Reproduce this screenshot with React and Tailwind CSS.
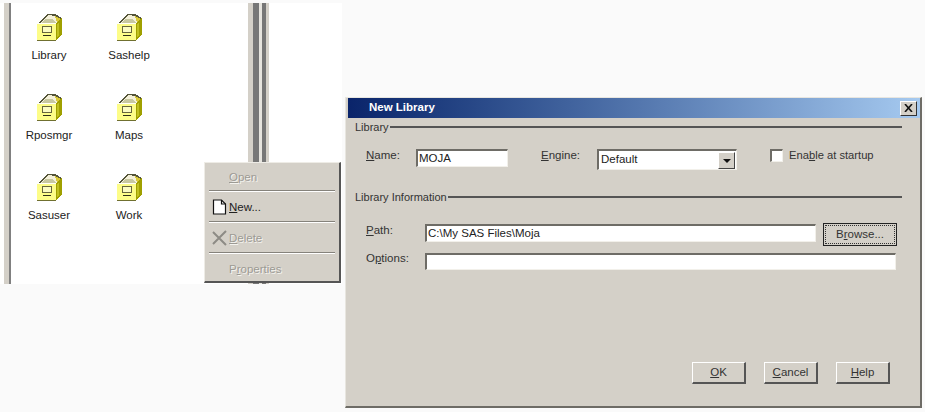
import React from "react";

const FONT = "font-['Liberation_Sans',Arial,sans-serif]";

function LibIcon() {
  return (
    <svg width="28" height="28" viewBox="0 0 28 28" shapeRendering="crispEdges">
      {/* folders sticking out of the drawer */}
      <polygon points="3,10 9,4 13,1 20,1 27,5 27,10" fill="#55553a" />
      <polygon points="5,10 10,5 14,2 19,3 22,6 22,10" fill="#f4f0d8" />
      <polygon points="10,6 18,6 21,10 7,10" fill="#c8c8a0" />
      <polygon points="20,3 26,6 26,11 22,10" fill="#d8c838" />
      {/* front and side */}
      <polygon points="21,10 27,5 27,21 21,27" fill="#a0a000" />
      <polygon points="22,11 24,9 24,22 22,24" fill="#c0c020" />
      <rect x="2" y="10" width="19" height="17" fill="#fdfd88" />
      <rect x="2" y="10" width="19" height="1" fill="#fffff8" />
      <rect x="7.5" y="13.5" width="9" height="6" fill="#fbfbc0" stroke="#66663c" strokeWidth="1" />
      <rect x="8" y="22" width="8" height="1" fill="#303018" />
      <rect x="2" y="27" width="19" height="1" fill="#707030" />
    </svg>
  );
}

function LibItem({ name }) {
  return (
    <div className="flex flex-col items-center w-[80px] h-[80px]">
      <LibIcon />
      <span className="mt-[7px] text-[11.5px] leading-[14px] text-[#222]">{name}</span>
    </div>
  );
}

function U({ children }) {
  return <span className="underline underline-offset-1">{children}</span>;
}

function Sunken({ className, children }) {
  return (
    <div className={`bg-white border border-t-[#6e6c66] border-l-[#6e6c66] border-b-[#f2f0ea] border-r-[#f2f0ea] border-t-2 border-l-2 text-[11.5px] leading-[14px] text-[#222] ${className}`}>
      {children}
    </div>
  );
}

function Btn({ children }) {
  return (
    <div className="flex items-center justify-center w-[54px] h-[22px] bg-[#d4d0c8] border border-t-white border-l-white border-b-2 border-r-2 border-b-[#555] border-r-[#555] text-[11.5px] text-[#333]">
      <span>{children}</span>
    </div>
  );
}

function MenuSep() {
  return <div className="mx-[4px] border-t border-b border-t-[#85827b] border-b-white" />;
}

function MenuRow({ icon, children, on, className = "h-[29px]" }) {
  return (
    <div className={`flex items-center pl-[7px] text-[11.5px] ${className} ${on ? "text-[#222]" : "text-[#9c9a94] [text-shadow:1px_1px_0_#f4f3ef]"}`}>
      <span className="flex items-center w-[16px] h-[16px] mr-[1px]">{icon}</span>
      <span className="mt-[2px]">{children}</span>
    </div>
  );
}

function Group({ title }) {
  return (
    <div className="flex items-center gap-[1px] h-[14px] text-[11px] text-[#333]">
      <span className="mt-[1px]">{title}</span>
      <div className="flex-1 border-t-2 border-[#555]" />
    </div>
  );
}

export default function App() {
  return (
    <div className={`relative w-[925px] h-[412px] overflow-hidden bg-[#fafafa] ${FONT}`}>
      {/* explorer window */}
      <div className="absolute left-0 top-[3px] w-[342px] h-[281px] bg-white flex">
        <div className="ml-[4px] w-[7px] h-full flex">
          <div className="w-[5px] bg-[#d4d0c8]" />
          <div className="w-[2px] bg-[#808080]" />
        </div>
        <div className="ml-[-2px] pt-[10px] grid grid-cols-[80px_80px] grid-rows-[80px_80px_80px] w-[238px]">
          {["Library", "Sashelp", "Rposmgr", "Maps", "Sasuser", "Work"].map((n) => (
            <LibItem key={n} name={n} />
          ))}
        </div>
        <div className="flex h-full ml-[1px]">
          <div className="w-[5px] bg-[#d4d0c8]" />
          <div className="w-[6px] bg-[#777]" />
          <div className="w-[3px] bg-[#e6e4de]" />
          <div className="w-[4px] bg-[#777]" />
          <div className="w-[3px] bg-[#d4d0c8]" />
        </div>
      </div>

      {/* context menu */}
      <div className="absolute left-[204px] top-[162px] w-[137px] h-[121px] bg-[#d4d0c8] border border-t-[#eeece6] border-l-[#eeece6] border-b-2 border-r-2 border-b-[#555] border-r-[#555]">
        <MenuRow className="h-[27px]">
          <U>O</U>pen
        </MenuRow>
        <MenuSep />
        <MenuRow
          on
          icon={
            <svg width="15" height="16" viewBox="0 0 15 16" fill="white" stroke="#111" strokeWidth="1.2">
              <path d="M1.5 1h8l4 4v10h-12z" />
              <path d="M9.5 1v4h4" fill="none" />
            </svg>
          }
        >
          <U>N</U>ew...
        </MenuRow>
        <MenuSep />
        <MenuRow
          icon={
            <svg width="16" height="16" viewBox="0 0 16 16" fill="none" stroke="#8d8b85" strokeWidth="2">
              <path d="M1 2l13 13M14 1L1 14" />
            </svg>
          }
        >
          <U>D</U>elete
        </MenuRow>
        <MenuSep />
        <MenuRow>
          P<U>r</U>operties
        </MenuRow>
      </div>

      {/* dialog */}
      <div className="absolute left-[345px] top-[97px] w-[577px] h-[311px] bg-[#d4d0c8] border border-t-[#e8e6e0] border-l-[#e8e6e0] border-b-2 border-r-2 border-b-[#6e6c66] border-r-[#6e6c66] flex flex-col">
        <div className="flex items-center justify-between h-[20px] pl-[21px] pr-[3px] bg-gradient-to-r from-[#0a246a] to-[#a6caf0] ml-[2px]">
          <span className="text-white font-bold text-[11.5px]">New Library</span>
          <div className="flex items-center justify-center w-[17px] h-[15px] bg-[#d4d0c8] border border-t-white border-l-white border-b-[#333] border-r-[#333]">
            <svg width="9" height="8" viewBox="0 0 9 8" stroke="#111" strokeWidth="1.6">
              <path d="M1 0l7 8M8 0L1 8" />
            </svg>
          </div>
        </div>

        <div className="flex-1 flex flex-col pl-[9px] pr-[18px] pt-[2px]">
          <Group title="Library" />
          <div className="flex items-start pl-[11px] mt-[15px] h-[21px] text-[11.5px] text-[#333]">
            <span className="w-[50px] mt-[-2px]">
              <U>N</U>ame:
            </span>
            <Sunken className="w-[92px] h-[18px] pl-[1px] leading-[13px]">MOJA</Sunken>
            <span className="ml-[33px] w-[56px] mt-[-2px]">
              <U>E</U>ngine:
            </span>
            <Sunken className="flex justify-between w-[140px] h-[21px] pl-[2px] pt-[1px] pr-[1px]">
              <span>Default</span>
              <div className="flex items-center justify-center w-[17px] h-[17px] bg-[#d4d0c8] border border-t-white border-l-white border-b-[#444] border-r-[#444]">
                <svg width="8" height="4" viewBox="0 0 8 4" fill="#111">
                  <path d="M0 0h8L4 4z" />
                </svg>
              </div>
            </Sunken>
            <Sunken className="ml-[33px] w-[13px] h-[13px]" />
            <span className="ml-[6px] mt-[-2px] text-[11.2px]">
              Ena<U>b</U>le at startup
            </span>
          </div>

          <div className="mt-[20px]">
            <Group title="Library Information" />
          </div>

          <div className="flex items-start pl-[11px] mt-[20px] text-[11.5px] text-[#333]">
            <span className="w-[59px] mt-[-2px]">
              <U>P</U>ath:
            </span>
            <Sunken className="w-[391px] h-[18px] pl-[1px]">C:\My SAS Files\Moja</Sunken>
            <div className="ml-[7px] mt-[-1px] flex items-center justify-center w-[74px] h-[23px] border border-[#222] p-[1px]">
              <div className="w-full h-full flex items-center justify-center border border-dotted border-[#333]">
                <span className="mt-[1px]">
                  B<U>r</U>owse...
                </span>
              </div>
            </div>
          </div>

          <div className="flex items-start pl-[11px] mt-[7px] text-[11.5px] text-[#333]">
            <span className="w-[59px] mt-[-3px]">
              O<U>p</U>tions:
            </span>
            <Sunken className="w-[471px] h-[17px]" />
          </div>

          <div className="flex justify-end gap-[18px] mt-[92px] pr-[12px]">
            <Btn>
              <U>O</U>K
            </Btn>
            <Btn>
              <U>C</U>ancel
            </Btn>
            <Btn>
              <U>H</U>elp
            </Btn>
          </div>
        </div>
      </div>
    </div>
  );
}
